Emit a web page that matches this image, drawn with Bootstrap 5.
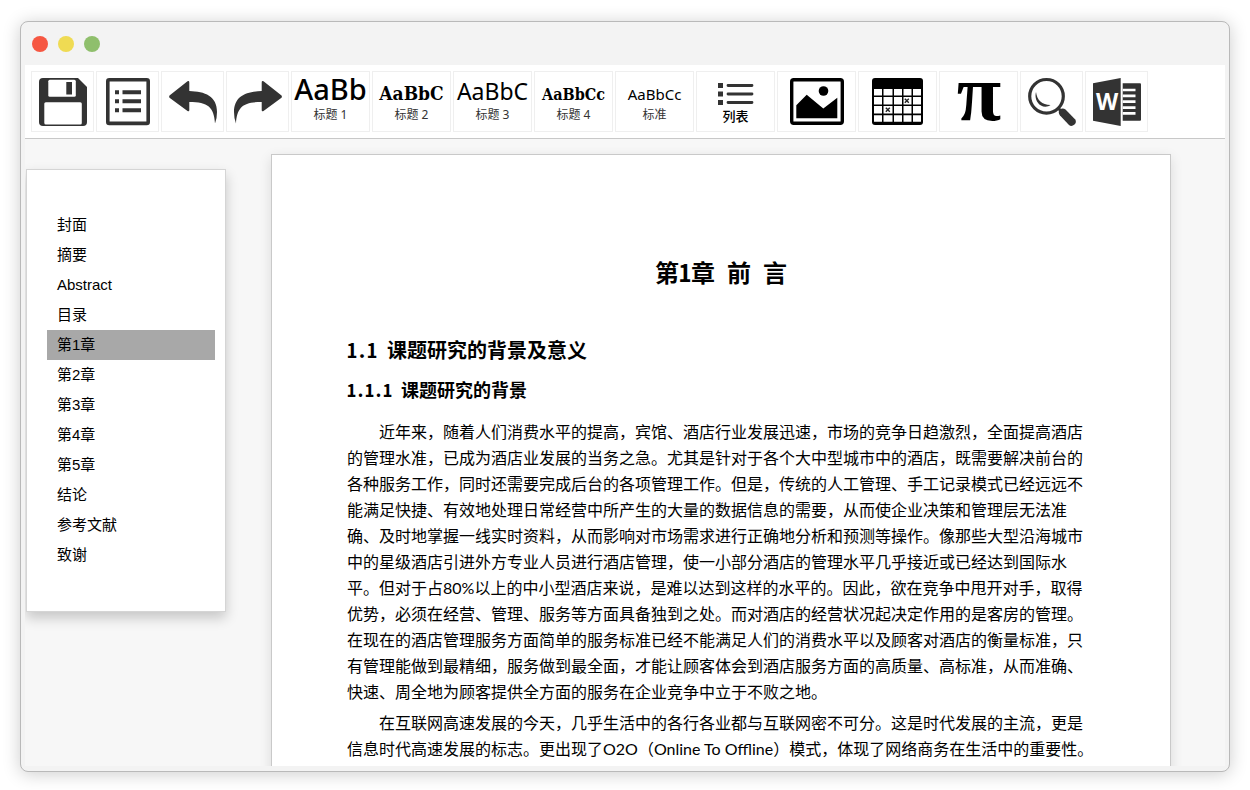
<!DOCTYPE html>
<html lang="zh-CN">
<head>
<meta charset="utf-8">
<meta name="viewport" content="width=device-width, initial-scale=1">
<title>论文编辑器</title>
<link rel="stylesheet" href="https://cdn.jsdelivr.net/npm/bootstrap@5.3.0/dist/css/bootstrap.min.css">
<style>
  body { font-family: "Liberation Sans", "Noto Sans CJK SC", sans-serif; color: #000; background: #fff; }
  .desk { height: 100vh; padding: 21px 20px 18px; }
  .app-window { background: #f3f3f3; border: 1px solid #b9b9b9; border-radius: 8px; box-shadow: 0 2px 18px rgba(0,0,0,.2); padding: 0 4px 5px; }
  .titlebar { height: 43px; padding-left: 7px; gap: 10px; }
  .light { width: 16px; height: 16px; border-radius: 50%; }
  .light-close { background: #f65742; }
  .light-min { background: #efdb53; }
  .light-max { background: #8fbf6c; }
  .toolbar { background: #fff; border-bottom: 1px solid #c8c8c8; padding: 6px; gap: 2px; }
  .tool { width: 63px; height: 61px; padding: 0; border: 1px solid #efefef; background: #fff; color: #000; flex: none; }
  .tool-wide { width: 79px; }
  .tool svg { display: block; overflow: visible; }
  .sample { height: 34px; font: 500 29px/34px "Noto Sans", sans-serif; white-space: nowrap; }
  .sample span { line-height: 1; }
  .sample .sample-2 { font: bold 19px/1 "DejaVu Serif Condensed", "DejaVu Serif", serif; }
  .sample .sample-3 { font-size: 23px; font-weight: 400; }
  .sample .sample-4 { font: bold 16px/1 "DejaVu Serif Condensed", "DejaVu Serif", serif; }
  .sample .sample-5 { font-size: 15px; font-weight: 400; }
  .tool-label { font: 12px/18px "Noto Sans", "Noto Sans CJK SC", sans-serif; color: #333; }
  .tool-label-strong { font-size: 13px; font-weight: 500; color: #000; }
  .workspace { background: #f7f7f7; min-height: 0; overflow: hidden; padding: 15px 54px 0 1px; gap: 45px; }
  .outline { width: 200px; margin-top: 15px; padding: 40px 10px 41px 20px; background: #fff; border: 1px solid #d5d5d5; box-shadow: 0 6px 12px rgba(0,0,0,.2); }
  .outline a { font-size: 15px; line-height: 30px; padding: 0 10px; color: #000; text-decoration: none; }
  .outline a.active { background: #a8a8a8; }
  .sheet { background: #fff; border: 1px solid #c9c9c9; box-shadow: 0 4px 12px rgba(0,0,0,.12); padding: 99px 75px; min-width: 0; }
  .sheet h1, .sheet h2, .sheet h3 { font-family: "Noto Sans CJK SC", sans-serif; font-weight: 700; font-feature-settings: "hwid"; margin: 0; }
  .sheet h1 { font-size: 24px; line-height: 36px; text-align: center; margin-bottom: 45px; }
  .sheet h2 { font-size: 20px; line-height: 30px; margin-bottom: 9px; }
  .sheet h3 { font-size: 18px; line-height: 30px; margin-bottom: 15px; }
  .sheet p { font: 16px/26px Lato, "Noto Sans CJK SC", sans-serif; text-indent: 2em; margin-bottom: 5px; }
</style>
</head>
<body>
<div class="desk">
  <div class="app-window d-flex flex-column h-100">
    <header class="titlebar d-flex align-items-center flex-shrink-0">
      <span class="light light-close"></span>
      <span class="light light-min"></span>
      <span class="light light-max"></span>
    </header>

    <div class="toolbar d-flex flex-shrink-0" role="toolbar" aria-label="编辑工具">
      <button type="button" class="tool d-flex align-items-center justify-content-center" aria-label="保存">
        <svg width="48" height="48" viewBox="0 0 48 48"><path fill="#333" d="M4 0h35l9 9v35a4 4 0 0 1-4 4H4a4 4 0 0 1-4-4V4a4 4 0 0 1 4-4z"/><rect x="9.300" y="1.700" width="27.500" height="17" rx="1.500" fill="#fff"/><rect x="27.300" y="4" width="5.700" height="12.500" fill="#333"/><rect x="5.300" y="24.300" width="37.500" height="22.300" rx="1.500" fill="#fff"/></svg>
      </button>
      <button type="button" class="tool d-flex align-items-center justify-content-center" aria-label="目录">
        <svg width="44" height="48" viewBox="0 0 44 48"><rect x="1.800" y="1.800" width="40.400" height="43.600" rx="1.500" fill="#fff" stroke="#333" stroke-width="3.600"/><path fill="#333" d="M9 12.300h4v4H9zM16.500 12.300H35v4H16.500zM9 21.300h4v4H9zM16.500 21.300H35v4H16.500zM9 30.300h4v4H9zM16.500 30.300H35v4H16.500z"/></svg>
      </button>
      <button type="button" class="tool d-flex align-items-center justify-content-center" aria-label="撤销">
        <svg width="48" height="48" viewBox="0 0 48 48"><path fill="#333" d="M.5 17.500 18.500 3.300Q20.300 2.500 20.300 4.500V13C36 13.500 48 18 48 34Q48 41 46 45.500C45 29 39 24 20.300 24V32Q20.300 34 18.500 33L.5 19.800Q-.3 18.700 .5 17.500z"/></svg>
      </button>
      <button type="button" class="tool d-flex align-items-center justify-content-center" aria-label="重做">
        <svg width="48" height="48" viewBox="0 0 48 48"><path fill="#333" d="M47.500 17.500 29.500 3.300Q27.700 2.500 27.700 4.500V13C12 13.500 0 18 0 34Q0 41 2 45.500C3 29 9 24 27.700 24V32Q27.700 34 29.500 33L47.500 19.800Q48.300 18.700 47.500 17.500z"/></svg>
      </button>

      <button type="button" class="tool tool-wide d-flex flex-column align-items-center"><span class="sample">AaBb</span><span class="tool-label">标题 1</span></button>
      <button type="button" class="tool tool-wide d-flex flex-column align-items-center"><span class="sample"><span class="sample-2">AaBbC</span></span><span class="tool-label">标题 2</span></button>
      <button type="button" class="tool tool-wide d-flex flex-column align-items-center"><span class="sample"><span class="sample-3">AaBbC</span></span><span class="tool-label">标题 3</span></button>
      <button type="button" class="tool tool-wide d-flex flex-column align-items-center"><span class="sample"><span class="sample-4">AaBbCc</span></span><span class="tool-label">标题 4</span></button>
      <button type="button" class="tool tool-wide d-flex flex-column align-items-center"><span class="sample"><span class="sample-5">AaBbCc</span></span><span class="tool-label">标准</span></button>
      <button type="button" class="tool tool-wide d-flex flex-column align-items-center justify-content-center pt-1">
        <svg width="36" height="24" viewBox="0 0 36 24"><path fill="#333" d="M0 0h5v5H0zM0 8.500h5v5H0zM0 17h5v5H0z"/><path stroke="#333" stroke-width="2.800" stroke-linecap="round" d="M10 2.500H34M10 11H34M10 19.500H34"/></svg>
        <span class="tool-label tool-label-strong">列表</span>
      </button>
      <button type="button" class="tool tool-wide d-flex align-items-center justify-content-center" aria-label="图片">
        <svg width="54" height="48" viewBox="0 0 54 48"><rect x="1.700" y="1.700" width="50.600" height="43.600" rx="2" fill="#fff" stroke="#000" stroke-width="3.400"/><circle cx="33.500" cy="13" r="4.800"/><path d="M6.300 27.300 16.700 16.800 33.300 30.500 47.300 19.700V40.300H6.300z"/></svg>
      </button>
      <button type="button" class="tool tool-wide d-flex align-items-center justify-content-center" aria-label="表格">
        <svg width="51" height="48" viewBox="0 0 51 48"><rect width="51" height="47" rx="3"/><g fill="#fff"><path d="M2 11h8v6.500H2zM11.500 11h9v6.500h-9zM22 11h8v6.500h-8zM31.500 11h8v6.500h-8zM41 11h8v6.500h-8z"/><path d="M2 19h8v7.500H2zM11.500 19h9v7.500h-9zM22 19h8v7.500h-8zM31.500 19h8v7.500h-8zM41 19h8v7.500h-8z"/><path d="M2 28h8v7.500H2zM11.500 28h9v7.500h-9zM22 28h8v7.500h-8zM31.500 28h8v7.500h-8zM41 28h8v7.500h-8z"/><path d="M2 37.300h8v6.500H2zM11.500 37.300h9v6.500h-9zM22 37.300h8v6.500h-8zM31.500 37.300h8v6.500h-8zM41 37.300h8v6.500h-8z"/></g><path stroke="#222" stroke-width="1.400" d="M32.800 20.800l4 4m0-4-4 4M13.800 29.800l4 4m0-4-4 4"/></svg>
      </button>
      <button type="button" class="tool tool-wide d-flex align-items-center justify-content-center" aria-label="公式">
        <svg width="48" height="48" viewBox="0 0 48 48"><text x="24" y="42" text-anchor="middle" font-family="Liberation Serif, serif" font-weight="bold" font-size="81">π</text></svg>
      </button>
      <button type="button" class="tool d-flex align-items-center justify-content-center" aria-label="查找">
        <svg width="48" height="48" viewBox="0 0 48 48"><circle cx="18.500" cy="18.300" r="16.800" fill="none" stroke="#333" stroke-width="3.200"/><path fill="#333" d="M8 14C9 22 14 27 22.500 27C20 29 16 29.300 13 27.500C8.500 25 6.500 19 8 14z"/><path d="M30 30l4 4" stroke="#333" stroke-width="3"/><path fill="#333" d="M31.500 31.800Q34.500 29.500 37.500 31.500L47 41.300Q49 44 46.500 46.500Q43.500 49 41 47L32 37.500Q29.800 34.500 31.500 31.800z"/></svg>
      </button>
      <button type="button" class="tool d-flex align-items-center justify-content-center" aria-label="导出 Word">
        <svg width="48" height="48" viewBox="0 0 48 48"><path fill="#333" d="M0 5.300 27.700 0v48L0 42.700z"/><path fill="#333" d="M29.700 5.300H47a1 1 0 0 1 1 1v35.400a1 1 0 0 1-1 1H29.700z"/><path stroke="#fff" stroke-width="2.700" d="M29.700 12H42.500M29.700 17.800H42.500M29.700 23.700H42.500M29.700 29.600H42.500M29.700 35.400H42.500"/><text x="14" y="32" text-anchor="middle" font-family="Liberation Sans Narrow, Open Sans, sans-serif" font-weight="bold" font-size="23" fill="#fff">W</text></svg>
      </button>
    </div>

    <div class="workspace d-flex align-items-start flex-grow-1">
      <nav class="outline flex-shrink-0 d-flex flex-column" aria-label="章节">
        <a href="#cover">封面</a>
        <a href="#summary">摘要</a>
        <a href="#abstract">Abstract</a>
        <a href="#toc">目录</a>
        <a href="#chapter1" class="active" aria-current="true">第1章</a>
        <a href="#chapter2">第2章</a>
        <a href="#chapter3">第3章</a>
        <a href="#chapter4">第4章</a>
        <a href="#chapter5">第5章</a>
        <a href="#conclusion">结论</a>
        <a href="#references">参考文献</a>
        <a href="#thanks">致谢</a>
      </nav>
      <main class="sheet flex-grow-1">
        <h1 id="chapter1">第1章 前 言</h1>
        <h2>1.1 课题研究的背景及意义</h2>
        <h3>1.1.1 课题研究的背景</h3>
        <p>近年来，随着人们消费水平的提高，宾馆、酒店行业发展迅速，市场的竞争日趋激烈，全面提高酒店的管理水准，已成为酒店业发展的当务之急。尤其是针对于各个大中型城市中的酒店，既需要解决前台的各种服务工作，同时还需要完成后台的各项管理工作。但是，传统的人工管理、手工记录模式已经远远不能满足快捷、有效地处理日常经营中所产生的大量的数据信息的需要，从而使企业决策和管理层无法准确、及时地掌握一线实时资料，从而影响对市场需求进行正确地分析和预测等操作。像那些大型沿海城市中的星级酒店引进外方专业人员进行酒店管理，使一小部分酒店的管理水平几乎接近或已经达到国际水平。但对于占80%以上的中小型酒店来说，是难以达到这样的水平的。因此，欲在竞争中甩开对手，取得优势，必须在经营、管理、服务等方面具备独到之处。而对酒店的经营状况起决定作用的是客房的管理。在现在的酒店管理服务方面简单的服务标准已经不能满足人们的消费水平以及顾客对酒店的衡量标准，只有管理能做到最精细，服务做到最全面，才能让顾客体会到酒店服务方面的高质量、高标准，从而准确、快速、周全地为顾客提供全方面的服务在企业竞争中立于不败之地。</p>
        <p>在互联网高速发展的今天，几乎生活中的各行各业都与互联网密不可分。这是时代发展的主流，更是信息时代高速发展的标志。更出现了O2O（Online To Offline）模式，体现了网络商务在生活中的重要性。</p>
      </main>
    </div>
  </div>
</div>
<script src="https://cdn.jsdelivr.net/npm/bootstrap@5.3.0/dist/js/bootstrap.bundle.min.js"></script>
</body>
</html>
